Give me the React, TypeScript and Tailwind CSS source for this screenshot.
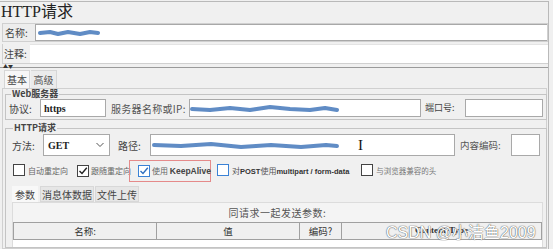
import React from "react";

const CJK = "font-['Noto_Sans_CJK_SC',sans-serif]";

function Scribble({ w, h, d }: { w: number; h: number; d: string }) {
  return (
    <svg width={w} height={h} viewBox={`0 0 ${w} ${h}`} className="block">
      <path d={d} fill="none" stroke="#4f7fbf" strokeWidth={4} strokeLinecap="round" strokeLinejoin="round" opacity={0.9} />
    </svg>
  );
}

function Box({ checked, blue }: { checked?: boolean; blue?: boolean }) {
  return (
    <span
      className={`inline-flex w-[12px] h-[12px] bg-white border ${blue ? "border-[#3b82d6]" : "border-[#444]"} items-center justify-center shrink-0`}
    >
      {checked && (
        <svg width="10" height="10" viewBox="0 0 10 10">
          <path d="M1.5 5 L4 7.5 L8.8 1.8" fill="none" stroke={blue ? "#2f6fc0" : "#222"} strokeWidth={1.4} />
        </svg>
      )}
    </span>
  );
}

export default function App() {
  return (
    <div className={`w-[553px] h-[249px] bg-[#f0f0f0] overflow-hidden relative text-[#333] ${CJK}`}>
      <div className="mt-[1px] w-[549px] h-[248px] border-t border-r border-[#b9b9b9] flex flex-col">
        {/* Title */}
        <div className="h-[20px] text-[16px] leading-[20px] font-['Liberation_Serif','Noto_Sans_CJK_SC',serif] text-[#222] pl-[1px]">
          HTTP请求
        </div>
        {/* Name row */}
        <div className="mt-[1px] ml-[2px] h-[19px] flex border border-[#d0d0d0] bg-[#ededed]">
          <div className="w-[32px] text-[10px] leading-[17px] pl-[2px] text-[#444]">名称:</div>
          <div className="flex-1 bg-white border-t border-l border-b border-[#a8a8a8] flex items-center pl-[2px]">
            <Scribble w={62} h={8} d="M2 4 L12 3 L20 5 L30 3 L42 5 L52 3 L60 4" />
          </div>
        </div>
        {/* Comment row */}
        <div className="mt-[2px] ml-[2px] h-[20px] flex border-l border-b border-[#d0d0d0]">
          <div className="w-[27px] text-[10px] leading-[19px] pl-[1px] text-[#444]">注释:</div>
          <div className="flex-1 bg-white border-t border-[#e4e4e4]"></div>
        </div>
        {/* Splitter */}
        <div className="relative mt-[3px] border-t border-[#9a9a9a]">
          <span className="absolute left-[3px] top-[-5px] text-[5px] leading-[5px] text-[#333]">▲▼</span>
        </div>
        {/* Tabs */}
        <div className="mt-[2px] flex pl-[4px] h-[18px] text-[10px]">
          <div className="w-[26px] bg-[#f7f7f7] border-t border-l border-r border-[#d6d6d6] flex items-center justify-center text-[#444]">基本</div>
          <div className="w-[26px] ml-[1px] bg-[#ebebeb] border-t border-r border-[#d6d6d6] flex items-center justify-center text-[#555]">高级</div>
        </div>
        {/* Tab content */}
        <div className="ml-[2px] mr-[1px] flex-1 border border-[#d0d0d0] bg-[#f0f0f0] px-[2px] flex flex-col">
          <fieldset className="border border-[#c4c4c4] px-[3px] pb-[2px] h-[31px]">
            <legend className="ml-[2px] px-[1px] text-[9px] leading-[10px] font-bold text-[#444]">Web服务器</legend>
            <div className="flex items-center h-[18px] text-[10px] whitespace-nowrap">
              <span className="w-[31px] text-[#444]">协议:</span>
              <div className="w-[66px] h-[18px] bg-white border border-[#a9a9a9] flex items-center pl-[3px] text-[10px] font-bold font-['Liberation_Serif',serif] text-[#222]">https</div>
              <span className="ml-[5px] w-[78px] text-[#555] tracking-[0.3px]">服务器名称或IP:</span>
              <div className="w-[232px] h-[18px] bg-white border border-[#a9a9a9] flex items-center overflow-hidden">
                <Scribble w={150} h={12} d="M2 7 L20 8 L40 6 L60 8 L80 5 L100 7 L120 8 L135 6 L147 8" />
              </div>
              <span className="ml-[4px] w-[40px] text-[#444] text-[9px]">端口号:</span>
              <div className="w-[78px] h-[18px] bg-white border border-[#a9a9a9]"></div>
            </div>
          </fieldset>
          <fieldset className="mt-[3px] border border-[#c4c4c4] px-[6px] flex-1 flex flex-col">
            <legend className="ml-[1px] px-[1px] text-[9px] leading-[10px] font-bold text-[#444]">HTTP请求</legend>
            <div className="flex items-center h-[22px] mt-[1px] text-[10px] whitespace-nowrap">
              <span className="w-[31px] text-[#444]">方法:</span>
              <div className="w-[67px] h-[22px] bg-white border border-[#a9a9a9] flex items-center pl-[4px] pr-[5px] justify-between">
                <span className="font-bold font-['Liberation_Serif',serif] text-[10px] text-[#222]">GET</span>
                <svg width="8" height="6" viewBox="0 0 8 6"><path d="M0.5 1 L4 4.5 L7.5 1" fill="none" stroke="#555" strokeWidth={1} /></svg>
              </div>
              <span className="ml-[8px] w-[32px] text-[#444]">路径:</span>
              <div className="relative w-[305px] h-[22px] bg-white border border-[#a9a9a9] flex items-center overflow-hidden">
                <Scribble w={190} h={12} d="M3 6 L30 7 L60 5 L90 8 L120 6 L150 8 L175 6 L186 7" />
                <span className="absolute left-[207px] top-[2px] text-[15px] leading-[16px] font-['Liberation_Serif',serif] text-[#111]">I</span>
              </div>
              <span className="ml-[5px] w-[51px] text-[#555] text-[9.5px]">内容编码:</span>
              <div className="w-[29px] h-[22px] bg-white border border-[#a9a9a9]"></div>
            </div>
            <div className="flex items-center h-[22px] mt-[4px] text-[8px] text-[#666] whitespace-nowrap">
              <span className="ml-[1px]"><Box /></span>
              <span className="ml-[3px] w-[49px] shrink-0">自动重定向</span>
              <Box checked />
              <span className="ml-[2px] w-[38px] shrink-0">跟随重定向</span>
              <div className="h-[22px] w-[82px] shrink-0 border border-[#e58a8a] flex items-center pl-[8px]">
                <Box checked blue />
                <span className="ml-[2px]">使用 <span className="font-bold font-['Liberation_Sans',sans-serif] text-[8.5px] text-[#444]">KeepAlive</span></span>
              </div>
              <span className="ml-[6px]"><Box blue /></span>
              <span className="ml-[3px] text-[#555]">对<span className="font-bold font-['Liberation_Sans',sans-serif] text-[7.5px] text-[#333]">POST</span>使用<span className="font-bold font-['Liberation_Sans',sans-serif] text-[7.5px] text-[#333]">multipart / form-data</span></span>
              <span className="ml-[12px]"><Box /></span>
              <span className="ml-[3px] text-[7.5px] text-[#777]">与浏览器兼容的头</span>
            </div>
            {/* Sub tabs */}
            <div className="mt-[4px] flex h-[16px] text-[10px] text-[#444]">
              <div className="w-[26px] bg-[#f8f8f8] flex items-center justify-center">参数</div>
              <div className="ml-[2px] w-[54px] bg-[#e6e6e6] border border-[#d8d8d8] flex items-center justify-center">消息体数据</div>
              <div className="ml-[1px] w-[44px] bg-[#e6e6e6] border border-[#d8d8d8] flex items-center justify-center">文件上传</div>
            </div>
            <div className="flex-1 mr-[-3px] bg-[#f4f4f4] border-t border-l border-r border-[#dcdcdc] flex flex-col">
              <div className="h-[19px] text-[10px] text-[#555] text-center leading-[19px] tracking-[0.5px]">同请求一起发送参数:</div>
              <div className="flex h-[18px] border border-[#a0a0a0] bg-[#f0f0f0] text-[9.5px] text-[#333]">
                <div className="w-[143px] border-r border-[#a0a0a0] flex items-center justify-center">名称:</div>
                <div className="w-[143px] border-r border-[#a0a0a0] flex items-center justify-center">值</div>
                <div className="w-[42px] border-r border-[#a0a0a0] flex items-center justify-center">编码?</div>
                <div className="flex-1 flex items-center justify-center font-bold font-['Liberation_Serif',serif] text-[9px]">Content-Type</div>
              </div>
              <div className="flex-1 bg-white"></div>
            </div>
          </fieldset>
        </div>
      </div>
      {/* Watermark */}
      <div className="absolute left-[386px] top-[224px] text-[16px] leading-[18px] text-white font-['Liberation_Sans','Noto_Sans_CJK_SC',sans-serif] [text-shadow:0_0_1px_#555,0_0_1px_#555]">
        CSDN @小洁鱼2009
      </div>
    </div>
  );
}
